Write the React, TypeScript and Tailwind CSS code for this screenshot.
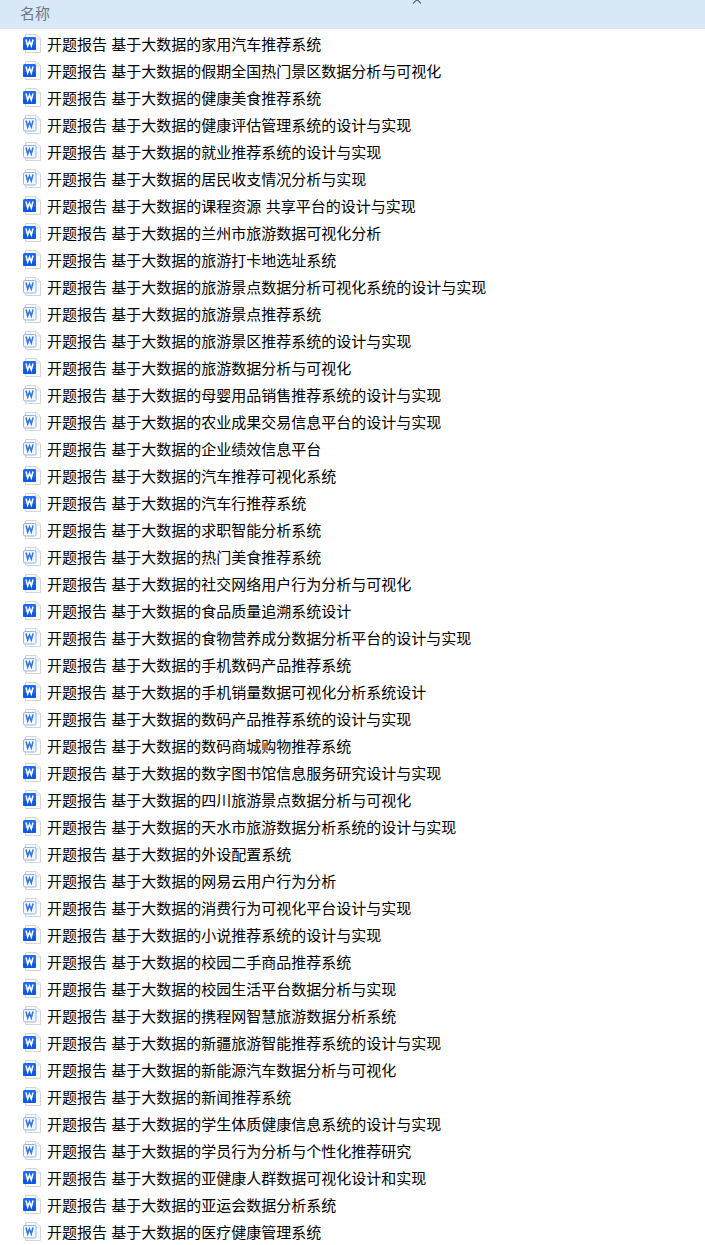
const rows: [string, number][] = [
  ["家用汽车推荐系统", 1],
  ["假期全国热门景区数据分析与可视化", 1],
  ["健康美食推荐系统", 1],
  ["健康评估管理系统的设计与实现", 0],
  ["就业推荐系统的设计与实现", 0],
  ["居民收支情况分析与实现", 0],
  ["课程资源 共享平台的设计与实现", 1],
  ["兰州市旅游数据可视化分析", 1],
  ["旅游打卡地选址系统", 1],
  ["旅游景点数据分析可视化系统的设计与实现", 0],
  ["旅游景点推荐系统", 0],
  ["旅游景区推荐系统的设计与实现", 0],
  ["旅游数据分析与可视化", 1],
  ["母婴用品销售推荐系统的设计与实现", 0],
  ["农业成果交易信息平台的设计与实现", 0],
  ["企业绩效信息平台", 0],
  ["汽车推荐可视化系统", 1],
  ["汽车行推荐系统", 1],
  ["求职智能分析系统", 0],
  ["热门美食推荐系统", 0],
  ["社交网络用户行为分析与可视化", 1],
  ["食品质量追溯系统设计", 1],
  ["食物营养成分数据分析平台的设计与实现", 0],
  ["手机数码产品推荐系统", 0],
  ["手机销量数据可视化分析系统设计", 1],
  ["数码产品推荐系统的设计与实现", 0],
  ["数码商城购物推荐系统", 0],
  ["数字图书馆信息服务研究设计与实现", 1],
  ["四川旅游景点数据分析与可视化", 1],
  ["天水市旅游数据分析系统的设计与实现", 1],
  ["外设配置系统", 0],
  ["网易云用户行为分析", 0],
  ["消费行为可视化平台设计与实现", 0],
  ["小说推荐系统的设计与实现", 1],
  ["校园二手商品推荐系统", 1],
  ["校园生活平台数据分析与实现", 1],
  ["携程网智慧旅游数据分析系统", 0],
  ["新疆旅游智能推荐系统的设计与实现", 1],
  ["新能源汽车数据分析与可视化", 1],
  ["新闻推荐系统", 1],
  ["学生体质健康信息系统的设计与实现", 0],
  ["学员行为分析与个性化推荐研究", 0],
  ["亚健康人群数据可视化设计和实现", 1],
  ["亚运会数据分析系统", 1],
  ["医疗健康管理系统", 0],
];

function WordIcon({ dark }: { dark: boolean }) {
  return (
    <svg width="20" height="19" viewBox="0 0 20 19" className="shrink-0">
      <path d="M3.5 0.5H14L18.5 4.5V18.5H3.5Z" fill="#fdfdfd" stroke="#d4d4d4" />
      <path d="M13.5 0.5V5H18.5" fill="#f2f2f2" stroke="#dedede" />
      {dark ? (
        <>
          <rect x="1" y="3" width="13" height="13" rx="1.5" fill="#1c6af2" />
          <rect x="1" y="11" width="13" height="5" rx="1.5" fill="#0e59e4" />
        </>
      ) : (
        <rect x="1.5" y="3.5" width="12.5" height="12.5" rx="1.5" fill="#f3f8ff" stroke="#8db5f6" />
      )}
      <path
        d="M4 5.5L5.7 12L7.5 7L9.3 12L11 5.5"
        fill="none"
        stroke={dark ? "#ffffff" : "#2f74e8"}
        strokeWidth="1.5"
      />
    </svg>
  );
}

export default function App() {
  return (
    <div className="relative h-[1245px] w-[705px] overflow-hidden bg-white font-['Noto_Sans_CJK_SC',sans-serif] text-[15px]">
      <div className="flex h-[29px] items-center bg-[#d9e8f7] pb-[2px] pl-5 text-[#6d7a88]">名称</div>
      <svg width="10" height="5" viewBox="0 0 10 5" className="absolute -top-[1px] left-[412px]">
        <path d="M1 4.5L5 0.5L9 4.5" fill="none" stroke="#5f6b78" strokeWidth="1.2" />
      </svg>
      <ul className="pt-[1px]">
        {rows.map(([name, dark]) => (
          <li key={name} className="flex h-[27px] items-center gap-[5px] pl-[22px] text-black">
            <WordIcon dark={dark === 1} />
            <span className="-mt-[1px] whitespace-pre leading-[27px] [word-spacing:1px]">{`开题报告 基于大数据的${name}`}</span>
          </li>
        ))}
      </ul>
    </div>
  );
}
